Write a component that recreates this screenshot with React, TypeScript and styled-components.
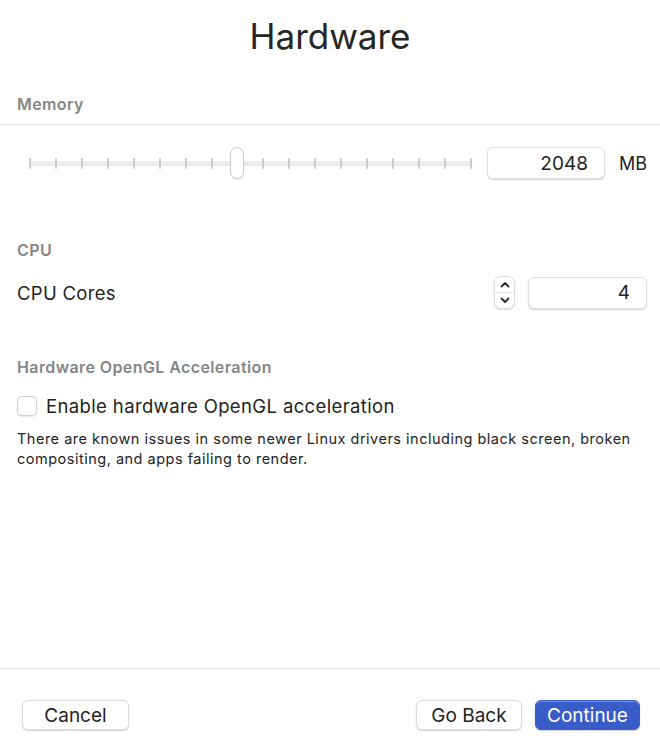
import React from "react";
import styled, { createGlobalStyle } from "styled-components";

const Global = createGlobalStyle`
  html, body { margin: 0; padding: 0; background: #ffffff; }
  body { font-family: Inter, "Noto Sans", "Liberation Sans", sans-serif; color: #232323; }
  * { box-sizing: border-box; }
`;

const Page = styled.div`
  width: 660px;
  height: 745px;
  display: flex;
  flex-direction: column;
  background: #fff;
`;

const Main = styled.div`
  flex: 1;
  display: flex;
  flex-direction: column;
`;

const Title = styled.h1`
  margin: 15px 0 0;
  height: 42px;
  line-height: 42px;
  font-size: 35px;
  font-weight: 400;
  text-align: center;
  color: #262626;
`;

const SectionHeader = styled.div<{ $top: number }>`
  margin-top: ${(p) => p.$top}px;
  padding: 0 17px;
  height: 20px;
  line-height: 20px;
  font-size: 16px;
  font-weight: 600;
  letter-spacing: 0.4px;
  color: #868686;
`;

const Divider = styled.div`
  margin-top: 10px;
  height: 1px;
  background: #dedede;
`;

const Row = styled.div<{ $top: number; $h: number }>`
  margin-top: ${(p) => p.$top}px;
  height: ${(p) => p.$h}px;
  display: flex;
  align-items: center;
  padding: 0 13px 0 17px;
`;

const SliderWrap = styled.div`
  position: relative;
  flex: 1;
  height: 32px;
  margin-left: 12px;
  display: flex;
  align-items: center;
`;

const Track = styled.div`
  position: relative;
  width: 100%;
  height: 5px;
  background: #ececec;
  border-radius: 2px;
  display: flex;
  justify-content: space-between;
  align-items: center;
`;

const Tick = styled.span`
  width: 2px;
  height: 11px;
  background: #cdcdcd;
  border-radius: 1px;
`;

const Thumb = styled.div`
  position: absolute;
  top: 0;
  width: 14px;
  height: 32px;
  margin-left: -7px;
  background: #fff;
  border: 1px solid #c9c9c9;
  border-radius: 7px;
  box-shadow: 0 1px 1px rgba(0, 0, 0, 0.08);
`;

const NumberField = styled.div<{ $w: number; $h: number }>`
  width: ${(p) => p.$w}px;
  height: ${(p) => p.$h}px;
  border: 1px solid #e0e0e0;
  border-radius: 6px;
  box-shadow: 0 1px 1.5px rgba(0, 0, 0, 0.18);
  background: #fff;
  display: flex;
  align-items: center;
  justify-content: flex-end;
  padding-right: 16px;
  font-size: 19px;
  color: #232323;
`;

const Unit = styled.span`
  margin-left: 14px;
  font-size: 18px;
  color: #232323;
`;

const Label = styled.span`
  flex: 1;
  font-size: 18.5px;
  letter-spacing: 0.3px;
  color: #232323;
`;

const Stepper = styled.div`
  width: 21px;
  height: 33px;
  margin-right: 13px;
  border: 1px solid #dedede;
  border-radius: 7px;
  box-shadow: 0 1px 1.5px rgba(0, 0, 0, 0.15);
  display: flex;
  flex-direction: column;
  overflow: hidden;
  background: #fff;
`;

const StepHalf = styled.div<{ $top?: boolean }>`
  flex: 1;
  display: flex;
  align-items: center;
  justify-content: center;
  border-bottom: ${(p) => (p.$top ? "1px solid #e4e4e4" : "none")};
`;

const CheckRow = styled.label`
  margin-top: 17px;
  height: 24px;
  display: flex;
  align-items: center;
  gap: 9px;
  padding: 0 17px;
  font-size: 18.5px;
  letter-spacing: 0.37px;
  color: #232323;
`;

const Checkbox = styled.span`
  width: 20px;
  height: 20px;
  border: 1px solid #cfcfcf;
  border-radius: 5px;
  background: #fff;
  box-shadow: 0 0.5px 1px rgba(0, 0, 0, 0.1);
`;

const Note = styled.p`
  margin: 11px 0 0;
  padding: 0 17px;
  font-size: 14.5px;
  line-height: 20px;
  letter-spacing: 0.5px;
  color: #232323;
`;

const Footer = styled.div`
  border-top: 1px solid #dedede;
  padding: 31px 20px 15px 22px;
  display: flex;
  align-items: center;
  gap: 13px;
`;

const Spacer = styled.div`
  flex: 1;
`;

const Button = styled.button<{ $primary?: boolean; $w: number }>`
  height: 30px;
  width: ${(p) => p.$w}px;
  border-radius: 6px;
  font-family: inherit;
  font-size: 19px;
  padding: 0;
  cursor: pointer;
  color: ${(p) => (p.$primary ? "#ffffff" : "#232323")};
  background: ${(p) => (p.$primary ? "#3a5cc9" : "#ffffff")};
  border: 1px solid ${(p) => (p.$primary ? "#3a5cc9" : "#dcdcdc")};
  box-shadow: ${(p) =>
    p.$primary
      ? "inset 0 1px 0 rgba(255,255,255,0.35), 0 1px 1.5px rgba(0,0,0,0.2)"
      : "0 1px 1.5px rgba(0,0,0,0.18)"};
`;

const Chevron = ({ up }: { up?: boolean }) => (
  <svg width="10" height="7" viewBox="0 0 10 7">
    <path
      d={up ? "M1.5 5.5 L5 2 L8.5 5.5" : "M1.5 1.5 L5 5 L8.5 1.5"}
      fill="none"
      stroke="#2a2a2a"
      strokeWidth="1.8"
      strokeLinecap="round"
      strokeLinejoin="round"
    />
  </svg>
);

const TICKS = 18;
const THUMB_INDEX = 8;

export default function App() {
  return (
    <>
      <Global />
      <Page>
        <Main>
          <Title>Hardware</Title>

          <SectionHeader $top={37}>Memory</SectionHeader>
          <Divider />
          <Row $top={22} $h={32}>
            <SliderWrap>
              <Track>
                {Array.from({ length: TICKS }).map((_, i) => (
                  <Tick key={i} />
                ))}
              </Track>
              <Thumb style={{ left: `${(THUMB_INDEX / (TICKS - 1)) * 100}%` }} />
            </SliderWrap>
            <NumberField $w={118} $h={32} style={{ marginLeft: 15 }}>
              2048
            </NumberField>
            <Unit>MB</Unit>
          </Row>

          <SectionHeader $top={61}>CPU</SectionHeader>
          <Row $top={16} $h={33}>
            <Label>CPU Cores</Label>
            <Stepper>
              <StepHalf $top>
                <Chevron up />
              </StepHalf>
              <StepHalf>
                <Chevron />
              </StepHalf>
            </Stepper>
            <NumberField $w={119} $h={32}>
              4
            </NumberField>
          </Row>

          <SectionHeader $top={48}>Hardware OpenGL Acceleration</SectionHeader>
          <CheckRow>
            <Checkbox />
            Enable hardware OpenGL acceleration
          </CheckRow>
          <Note>
            There are known issues in some newer Linux drivers including black screen, broken
            compositing, and apps failing to render.
          </Note>
        </Main>
        <Footer>
          <Button $w={107}>Cancel</Button>
          <Spacer />
          <Button $w={106}>Go Back</Button>
          <Button $primary $w={105}>
            Continue
          </Button>
        </Footer>
      </Page>
    </>
  );
}
